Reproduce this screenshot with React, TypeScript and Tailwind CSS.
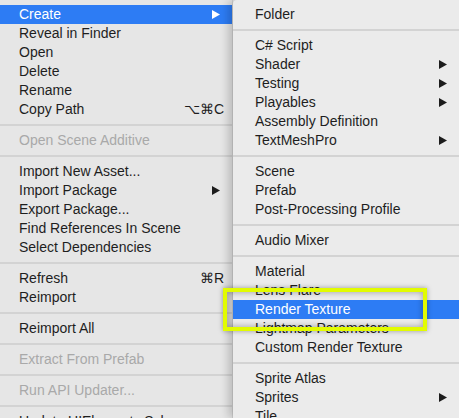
import React from 'react';

type Item =
  | { sep: true }
  | { label: string; shortcut?: string; arrow?: boolean; disabled?: boolean; active?: boolean };

const mainMenu: Item[] = [
  { label: 'Create', arrow: true, active: true },
  { label: 'Reveal in Finder' },
  { label: 'Open' },
  { label: 'Delete' },
  { label: 'Rename' },
  { label: 'Copy Path', shortcut: '⌥⌘C' },
  { sep: true },
  { label: 'Open Scene Additive', disabled: true },
  { sep: true },
  { label: 'Import New Asset...' },
  { label: 'Import Package', arrow: true },
  { label: 'Export Package...' },
  { label: 'Find References In Scene' },
  { label: 'Select Dependencies' },
  { sep: true },
  { label: 'Refresh', shortcut: '⌘R' },
  { label: 'Reimport' },
  { sep: true },
  { label: 'Reimport All' },
  { sep: true },
  { label: 'Extract From Prefab', disabled: true },
  { sep: true },
  { label: 'Run API Updater...', disabled: true },
  { sep: true },
  { label: 'Update UIElements Schema' },
];

const createMenu: Item[] = [
  { label: 'Folder' },
  { sep: true },
  { label: 'C# Script' },
  { label: 'Shader', arrow: true },
  { label: 'Testing', arrow: true },
  { label: 'Playables', arrow: true },
  { label: 'Assembly Definition' },
  { label: 'TextMeshPro', arrow: true },
  { sep: true },
  { label: 'Scene' },
  { label: 'Prefab' },
  { label: 'Post-Processing Profile' },
  { sep: true },
  { label: 'Audio Mixer' },
  { sep: true },
  { label: 'Material' },
  { label: 'Lens Flare' },
  { label: 'Render Texture', active: true },
  { label: 'Lightmap Parameters' },
  { label: 'Custom Render Texture' },
  { sep: true },
  { label: 'Sprite Atlas' },
  { label: 'Sprites', arrow: true },
  { label: 'Tile' },
];

function Arrow({ white }: { white?: boolean }) {
  return (
    <svg width="8" height="9" viewBox="0 0 8 9" className="shrink-0 mr-[4px]">
      <polygon points="0,0 8,4.5 0,9" fill={white ? '#ffffff' : '#1c1c1c'} />
    </svg>
  );
}

function MenuRows({ items, padLeft }: { items: Item[]; padLeft: string }) {
  return (
    <>
      {items.map((item, i) => {
        if ('sep' in item) {
          return (
            <div key={i} className="h-[12px] flex items-center">
              <div className="h-[2px] w-full bg-[#d3d3d3]" />
            </div>
          );
        }
        const color = item.active ? 'text-white bg-[#2d7cf4]' : item.disabled ? 'text-[#a9a9a9]' : 'text-[#1e1e1e]';
        return (
          <div key={i} className={`h-[19px] flex items-center justify-between whitespace-nowrap pr-[8px] ${padLeft} ${color}`}>
            <span>{item.label}</span>
            {item.shortcut && <span>{item.shortcut}</span>}
            {item.arrow && <Arrow white={item.active} />}
          </div>
        );
      })}
    </>
  );
}

export default function App() {
  return (
    <div className="relative w-[459px] h-[418px] overflow-hidden bg-[#e7e7e7] text-[14px] font-['Liberation_Sans',Arial,sans-serif]">
      <div className="flex h-full">
        {/* main context menu */}
        <div className="w-[233px] shrink-0 pt-[5px] bg-[#e6e6e6] border-r border-[#d2d2d2]">
          <MenuRows items={mainMenu} padLeft="pl-[19px]" />
        </div>
        {/* Create submenu */}
        <div className="flex-1 pt-[5px] bg-[#ebebeb] rounded-tl-[4px] shadow-[-5px_0_9px_rgba(0,0,0,0.18)] relative z-10">
          <MenuRows items={createMenu} padLeft="pl-[22px]" />
        </div>
      </div>

      {/* annotation box */}
      <div className="absolute left-[223px] top-[288px] w-[204px] h-[43px] border-[4px] border-[#e2fc00] z-20 shadow-[0_0_5px_rgba(0,0,0,0.35),inset_0_0_6px_rgba(0,0,0,0.35)]" />
    </div>
  );
}
